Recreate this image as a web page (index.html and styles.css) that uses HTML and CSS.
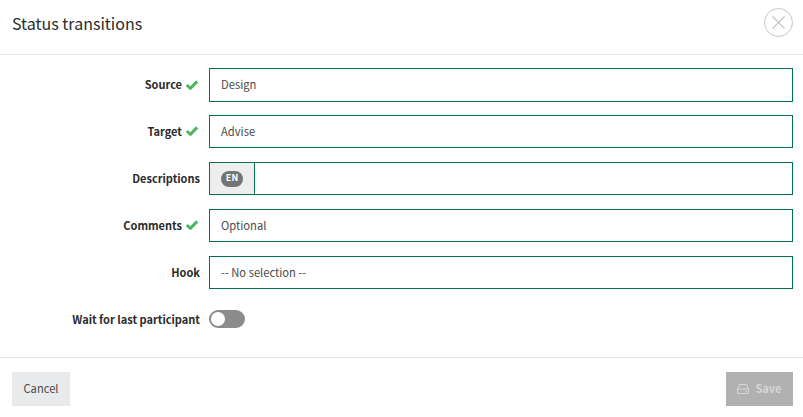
FILE: index.html
```html
<!DOCTYPE html>
<html lang="en">
<head>
<meta charset="utf-8">
<title>Status transitions</title>
<link rel="stylesheet" href="styles.css">
</head>
<body>
<div class="dialog">
  <header class="head">
    <h1 class="title">Status transitions</h1>
    <button class="close" aria-label="Close">
      <svg viewBox="0 0 29 29" width="29" height="29"><circle cx="14.5" cy="14.5" r="14" fill="none" stroke="#c4c4c4" stroke-width="1"/><path d="M8.5 8.5 L20.5 20.5 M20.5 8.5 L8.5 20.5" stroke="#c4c4c4" stroke-width="1.2" fill="none"/></svg>
    </button>
  </header>
  <form class="form">
    <div class="row">
      <label class="label"><span class="label-text">Source</span><svg class="check" viewBox="0 0 12 10" width="12" height="10"><path d="M0.8 5 L4.4 8.3 L11.2 1.4" fill="none" stroke="#4cb560" stroke-width="3"/></svg></label>
      <div class="field"><span class="value">Design</span></div>
    </div>
    <div class="row">
      <label class="label"><span class="label-text">Target</span><svg class="check" viewBox="0 0 12 10" width="12" height="10"><path d="M0.8 5 L4.4 8.3 L11.2 1.4" fill="none" stroke="#4cb560" stroke-width="3"/></svg></label>
      <div class="field"><span class="value">Advise</span></div>
    </div>
    <div class="row">
      <label class="label"><span class="label-text">Descriptions</span></label>
      <div class="field"><span class="addon"><span class="badge">EN</span></span></div>
    </div>
    <div class="row">
      <label class="label"><span class="label-text">Comments</span><svg class="check" viewBox="0 0 12 10" width="12" height="10"><path d="M0.8 5 L4.4 8.3 L11.2 1.4" fill="none" stroke="#4cb560" stroke-width="3"/></svg></label>
      <div class="field"><span class="value">Optional</span></div>
    </div>
    <div class="row">
      <label class="label"><span class="label-text">Hook</span></label>
      <div class="field"><span class="value">-- No selection --</span></div>
    </div>
    <div class="row row-toggle">
      <label class="label"><span class="label-text">Wait for last participant</span></label>
      <span class="toggle"><span class="knob"></span></span>
    </div>
  </form>
  <footer class="foot">
    <button class="btn cancel"><span class="btn-text">Cancel</span></button>
    <button class="btn save">
      <svg viewBox="0 0 12 10" width="12" height="10"><path d="M2.5 .5 H9.5 L11.5 5 V9.5 H.5 V5 Z M.5 5 H11.5 M8 7.3 H10" fill="none" stroke="#d6d7d6" stroke-width="1"/></svg>
      <span class="btn-text">Save</span>
    </button>
  </footer>
</div>
</body>
</html>
```
FILE: styles.css
```css
* { box-sizing: border-box; }
html, body { margin: 0; padding: 0; background: #fff; }
body {
  width: 803px;
  height: 417px;
  overflow: hidden;
  font-family: "Noto Sans CJK SC", "Noto Sans", sans-serif;
  font-size: 11.2px;
  line-height: 16px;
  color: #2b2b2b;
}
.dialog { display: flex; flex-direction: column; height: 417px; }
.head {
  height: 55px;
  border-bottom: 1px solid #e4e4e4;
  display: flex;
  align-items: flex-start;
  justify-content: space-between;
  padding: 8px 10px 0 12px;
}
.title { margin: 3px 0 0; font-size: 16px; line-height: 24px; font-weight: 400; color: #2b2b2b; }
.close { width: 29px; height: 29px; padding: 0; border: 0; background: none; display: block; }
.close svg { display: block; }
.form {
  height: 302px;
  padding: 13px 10px 0 0;
  display: flex;
  flex-direction: column;
}
.row { display: flex; align-items: center; height: 33px; margin-bottom: 14px; }
.row:first-child { height: 34px; margin-bottom: 13px; }
.label {
  width: 200px;
  flex: none;
  display: flex;
  align-items: center;
  justify-content: flex-end;
  gap: 4px;
  font-weight: 700;
  font-size: 11px;
  color: #2b2b2b;
  white-space: pre;
}
.label-text { padding-bottom: 1px; }
.row:first-child .label-text { padding-bottom: 2px; }
.check { display: block; margin: 0 2px 1px 0; }
.field {
  margin-left: 9px;
  flex: 1;
  height: 100%;
  border: 1px solid #00704f;
  display: flex;
  align-items: center;
  background: #fff;
}
.value { padding: 0 0 1px 11px; color: #4a4a4a; font-size: 11.2px; }
.row:first-child .value { padding-bottom: 2px; }
.addon {
  width: 45px;
  height: 100%;
  background: #eee;
  border-right: 1px solid #00704f;
  display: flex;
  align-items: center;
  justify-content: center;
}
.badge {
  width: 22px;
  height: 16px;
  border-radius: 8px;
  background: #757575;
  color: #fff;
  font-size: 9px;
  font-weight: 700;
  line-height: 14px;
  text-align: center;
}
.row.row-toggle { height: 32px; margin-bottom: 0; }
.toggle {
  margin-left: 9px;
  width: 36px;
  height: 18px;
  border-radius: 9px;
  background: #8c8c8c;
  padding: 2px;
  display: block;
}
.knob { display: block; width: 14px; height: 14px; border-radius: 50%; background: #fff; }
.foot {
  flex: 1;
  border-top: 1px solid #e4e4e4;
  display: flex;
  justify-content: space-between;
  align-items: flex-start;
  padding: 14px 10px 0 12px;
}
.btn {
  height: 34px;
  border: 0;
  padding: 0;
  font-family: inherit;
  font-size: 11.2px;
  line-height: 16px;
  display: flex;
  align-items: center;
  justify-content: center;
}
.btn-text { padding-bottom: 2px; }
.cancel { width: 58px; background: #e9eaeb; color: #4a4a4a; }
.save { width: 67px; background: #b0b1b0; color: #d6d7d6; font-weight: 700; font-size: 11px; gap: 6px; }
```
